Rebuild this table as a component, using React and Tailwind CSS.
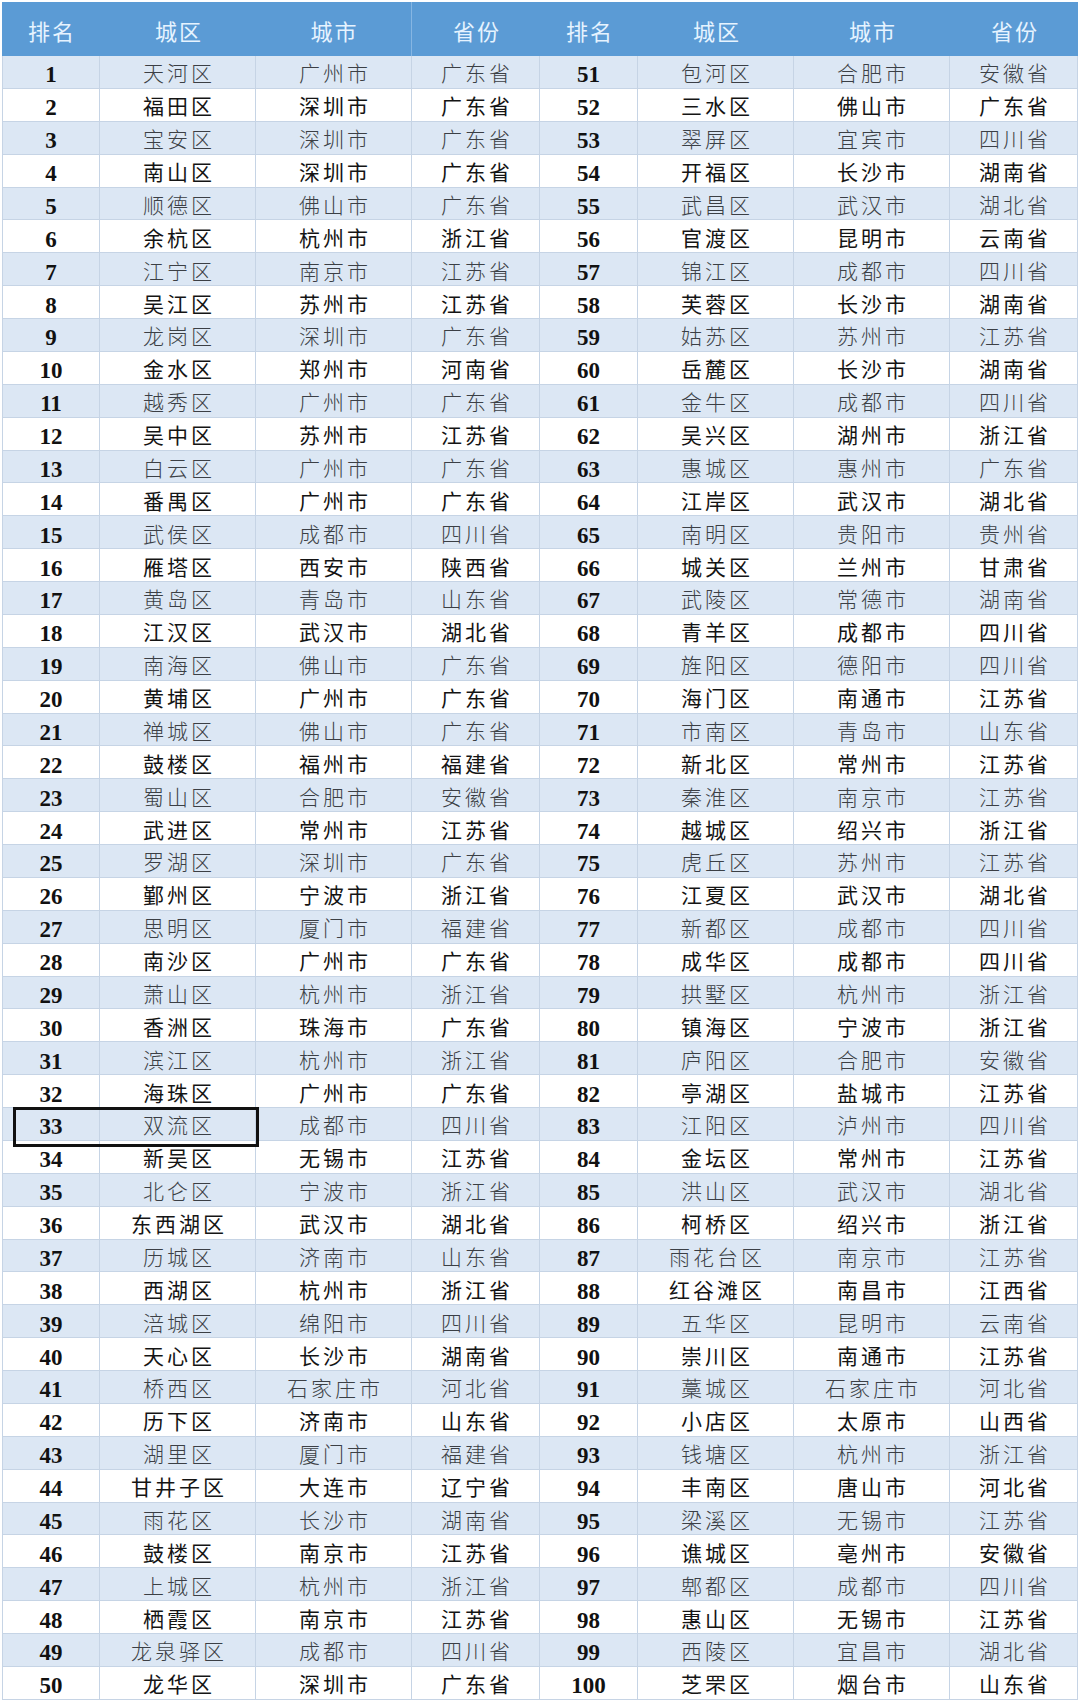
const rows = [
  [1, '天河区', '广州市', '广东省'],
  [2, '福田区', '深圳市', '广东省'],
  [3, '宝安区', '深圳市', '广东省'],
  [4, '南山区', '深圳市', '广东省'],
  [5, '顺德区', '佛山市', '广东省'],
  [6, '余杭区', '杭州市', '浙江省'],
  [7, '江宁区', '南京市', '江苏省'],
  [8, '吴江区', '苏州市', '江苏省'],
  [9, '龙岗区', '深圳市', '广东省'],
  [10, '金水区', '郑州市', '河南省'],
  [11, '越秀区', '广州市', '广东省'],
  [12, '吴中区', '苏州市', '江苏省'],
  [13, '白云区', '广州市', '广东省'],
  [14, '番禺区', '广州市', '广东省'],
  [15, '武侯区', '成都市', '四川省'],
  [16, '雁塔区', '西安市', '陕西省'],
  [17, '黄岛区', '青岛市', '山东省'],
  [18, '江汉区', '武汉市', '湖北省'],
  [19, '南海区', '佛山市', '广东省'],
  [20, '黄埔区', '广州市', '广东省'],
  [21, '禅城区', '佛山市', '广东省'],
  [22, '鼓楼区', '福州市', '福建省'],
  [23, '蜀山区', '合肥市', '安徽省'],
  [24, '武进区', '常州市', '江苏省'],
  [25, '罗湖区', '深圳市', '广东省'],
  [26, '鄞州区', '宁波市', '浙江省'],
  [27, '思明区', '厦门市', '福建省'],
  [28, '南沙区', '广州市', '广东省'],
  [29, '萧山区', '杭州市', '浙江省'],
  [30, '香洲区', '珠海市', '广东省'],
  [31, '滨江区', '杭州市', '浙江省'],
  [32, '海珠区', '广州市', '广东省'],
  [33, '双流区', '成都市', '四川省'],
  [34, '新吴区', '无锡市', '江苏省'],
  [35, '北仑区', '宁波市', '浙江省'],
  [36, '东西湖区', '武汉市', '湖北省'],
  [37, '历城区', '济南市', '山东省'],
  [38, '西湖区', '杭州市', '浙江省'],
  [39, '涪城区', '绵阳市', '四川省'],
  [40, '天心区', '长沙市', '湖南省'],
  [41, '桥西区', '石家庄市', '河北省'],
  [42, '历下区', '济南市', '山东省'],
  [43, '湖里区', '厦门市', '福建省'],
  [44, '甘井子区', '大连市', '辽宁省'],
  [45, '雨花区', '长沙市', '湖南省'],
  [46, '鼓楼区', '南京市', '江苏省'],
  [47, '上城区', '杭州市', '浙江省'],
  [48, '栖霞区', '南京市', '江苏省'],
  [49, '龙泉驿区', '成都市', '四川省'],
  [50, '龙华区', '深圳市', '广东省'],
  [51, '包河区', '合肥市', '安徽省'],
  [52, '三水区', '佛山市', '广东省'],
  [53, '翠屏区', '宜宾市', '四川省'],
  [54, '开福区', '长沙市', '湖南省'],
  [55, '武昌区', '武汉市', '湖北省'],
  [56, '官渡区', '昆明市', '云南省'],
  [57, '锦江区', '成都市', '四川省'],
  [58, '芙蓉区', '长沙市', '湖南省'],
  [59, '姑苏区', '苏州市', '江苏省'],
  [60, '岳麓区', '长沙市', '湖南省'],
  [61, '金牛区', '成都市', '四川省'],
  [62, '吴兴区', '湖州市', '浙江省'],
  [63, '惠城区', '惠州市', '广东省'],
  [64, '江岸区', '武汉市', '湖北省'],
  [65, '南明区', '贵阳市', '贵州省'],
  [66, '城关区', '兰州市', '甘肃省'],
  [67, '武陵区', '常德市', '湖南省'],
  [68, '青羊区', '成都市', '四川省'],
  [69, '旌阳区', '德阳市', '四川省'],
  [70, '海门区', '南通市', '江苏省'],
  [71, '市南区', '青岛市', '山东省'],
  [72, '新北区', '常州市', '江苏省'],
  [73, '秦淮区', '南京市', '江苏省'],
  [74, '越城区', '绍兴市', '浙江省'],
  [75, '虎丘区', '苏州市', '江苏省'],
  [76, '江夏区', '武汉市', '湖北省'],
  [77, '新都区', '成都市', '四川省'],
  [78, '成华区', '成都市', '四川省'],
  [79, '拱墅区', '杭州市', '浙江省'],
  [80, '镇海区', '宁波市', '浙江省'],
  [81, '庐阳区', '合肥市', '安徽省'],
  [82, '亭湖区', '盐城市', '江苏省'],
  [83, '江阳区', '泸州市', '四川省'],
  [84, '金坛区', '常州市', '江苏省'],
  [85, '洪山区', '武汉市', '湖北省'],
  [86, '柯桥区', '绍兴市', '浙江省'],
  [87, '雨花台区', '南京市', '江苏省'],
  [88, '红谷滩区', '南昌市', '江西省'],
  [89, '五华区', '昆明市', '云南省'],
  [90, '崇川区', '南通市', '江苏省'],
  [91, '藁城区', '石家庄市', '河北省'],
  [92, '小店区', '太原市', '山西省'],
  [93, '钱塘区', '杭州市', '浙江省'],
  [94, '丰南区', '唐山市', '河北省'],
  [95, '梁溪区', '无锡市', '江苏省'],
  [96, '谯城区', '亳州市', '安徽省'],
  [97, '郫都区', '成都市', '四川省'],
  [98, '惠山区', '无锡市', '江苏省'],
  [99, '西陵区', '宜昌市', '湖北省'],
  [100, '芝罘区', '烟台市', '山东省'],
]

const cjk = { fontFamily: '"Noto Sans CJK SC", "Noto Sans", sans-serif' }
const serif = { fontFamily: '"Liberation Serif", "Times New Roman", serif' }

const headers = ['排名', '城区', '城市', '省份']

function HeaderCell({ label, divider }) {
  return (
    <div
      className={`flex items-center justify-center pl-[2px] pt-[2px] text-[22px] tracking-[2px] text-[#e6f3ff] ${
        divider ? 'border-r border-[#86b6e3]' : ''
      }`}
      style={cjk}
    >
      {label}
    </div>
  )
}

function Cells({ row, shaded, first }) {
  const [rank, district, city, province] = row
  const text = shaded ? 'text-[#3b3f45] font-light' : 'text-[#141414] font-normal'
  const cell = 'flex items-center justify-center border-r border-[#c6d4e5]'
  return (
    <>
      <div className={`${cell} pt-[6px] ${first ? 'border-l' : ''}`}>
        <span className="text-[23px] font-bold leading-none text-[#111]" style={serif}>
          {rank}
        </span>
      </div>
      {[district, city, province].map((t, i) => (
        <div key={i} className={`${cell} pt-[2px]`}>
          <span className={`pl-[3px] text-[21px] leading-none tracking-[3px] ${text}`} style={cjk}>
            {t}
          </span>
        </div>
      ))}
    </>
  )
}

export default function App() {
  const left = rows.slice(0, 50)
  const right = rows.slice(50)

  return (
    <div className="relative h-[1705px] w-[1080px] overflow-hidden bg-white pl-[2px] pt-[2px]">
      <div className="w-[1076px]">
        <div className="grid h-[54px] grid-cols-[98px_156px_156px_128px_98px_156px_156px_128px] bg-[#5b9bd5]">
          {headers.map((h, i) => (
            <HeaderCell key={`l${h}`} label={h} divider={i === 2} />
          ))}
          {headers.map((h) => (
            <HeaderCell key={`r${h}`} label={h} />
          ))}
        </div>
        {left.map((row, i) => {
          const shaded = i % 2 === 0
          return (
            <div
              key={row[0]}
              className={`grid h-[32.88px] grid-cols-[98px_156px_156px_128px_98px_156px_156px_128px] border-b border-[#c6d4e5] ${
                shaded ? 'bg-[#dce7f4]' : 'bg-white'
              }`}
            >
              <Cells row={row} shaded={shaded} first />
              <Cells row={right[i]} shaded={shaded} />
            </div>
          )
        })}
      </div>

      {/* highlight around row 33 */}
      <div className="absolute left-[13px] top-[1107px] h-[40px] w-[246px] border-[3px] border-[#111]" />
    </div>
  )
}
